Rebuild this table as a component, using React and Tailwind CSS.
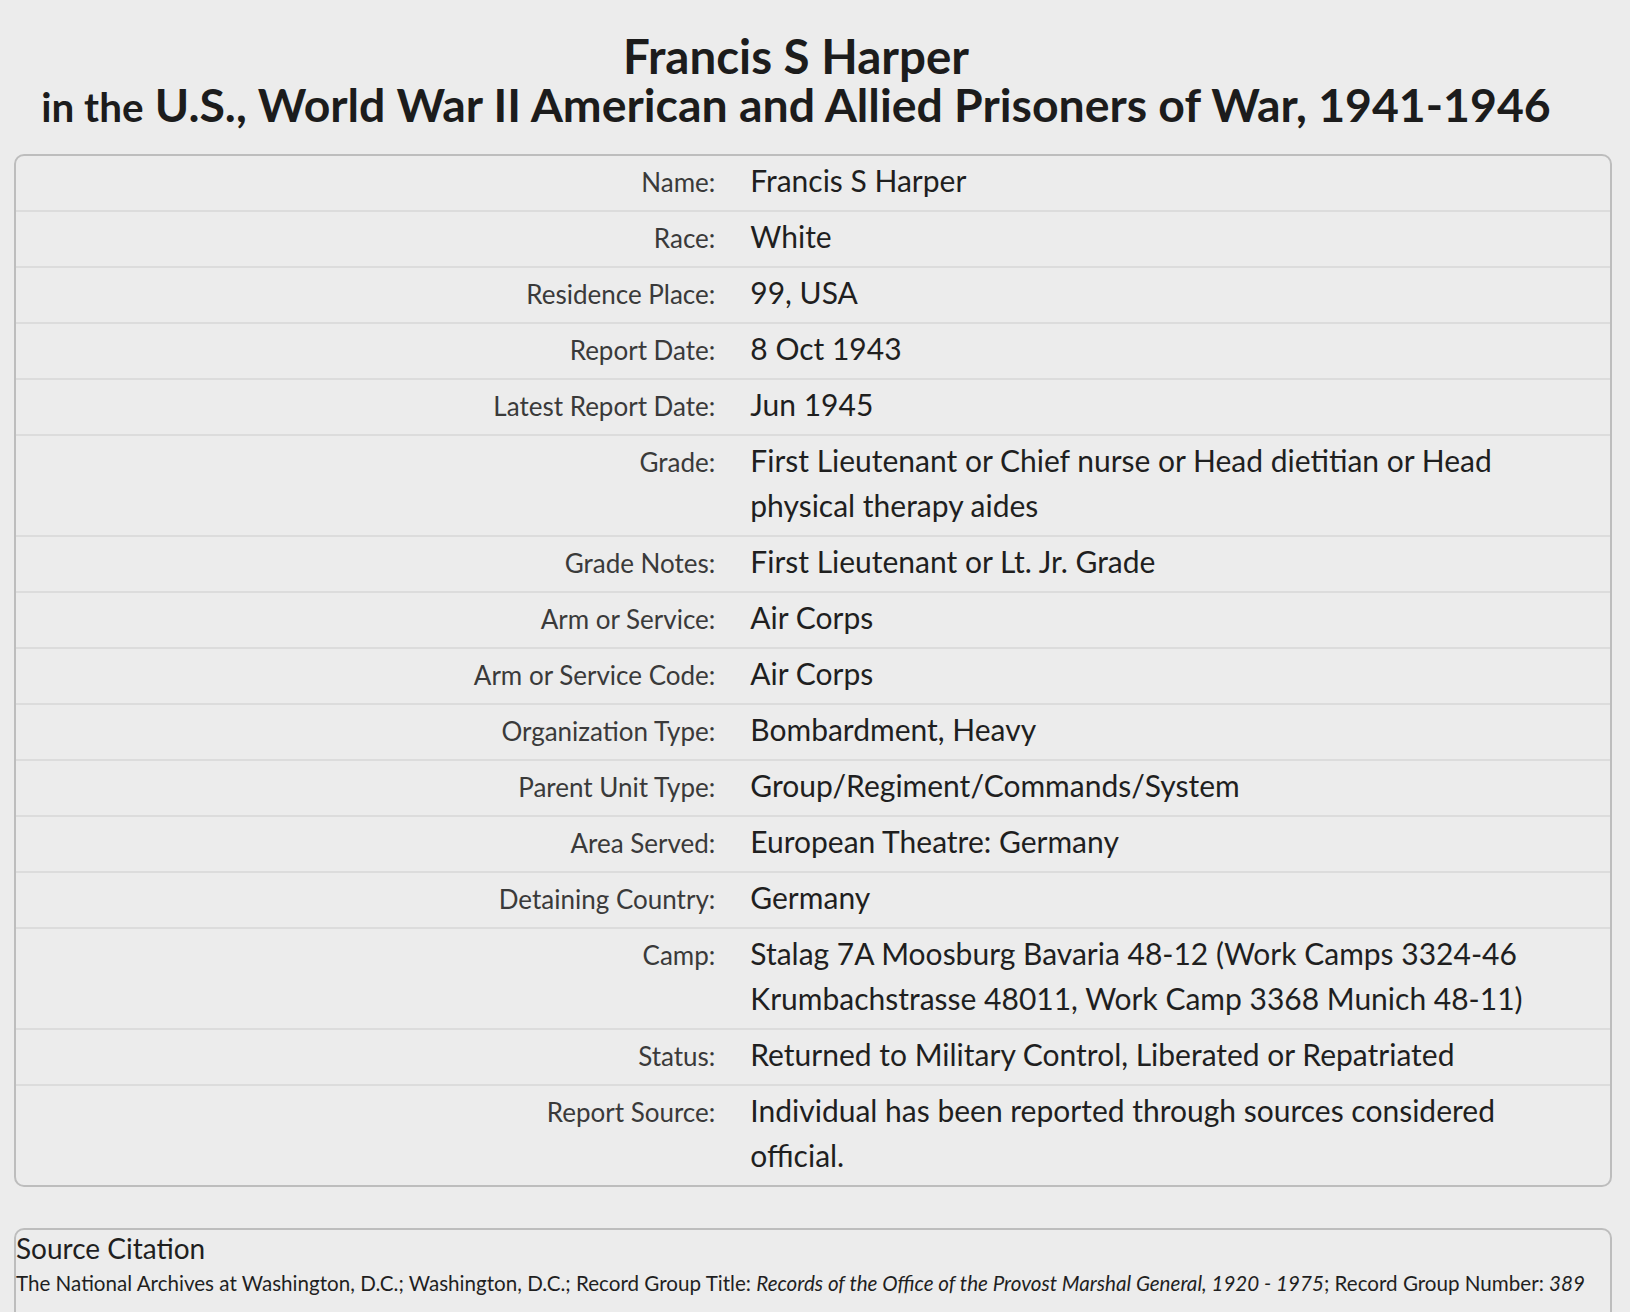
import React from "react";

const rows = [
  ["Name:", "Francis S Harper"],
  ["Race:", "White"],
  ["Residence Place:", "99, USA"],
  ["Report Date:", "8 Oct 1943"],
  ["Latest Report Date:", "Jun 1945"],
  ["Grade:", "First Lieutenant or Chief nurse or Head dietitian or Head physical therapy aides"],
  ["Grade Notes:", "First Lieutenant or Lt. Jr. Grade"],
  ["Arm or Service:", "Air Corps"],
  ["Arm or Service Code:", "Air Corps"],
  ["Organization Type:", "Bombardment, Heavy"],
  ["Parent Unit Type:", "Group/Regiment/Commands/System"],
  ["Area Served:", "European Theatre: Germany"],
  ["Detaining Country:", "Germany"],
  ["Camp:", "Stalag 7A Moosburg Bavaria 48-12 (Work Camps 3324-46 Krumbachstrasse 48011, Work Camp 3368 Munich 48-11)"],
  ["Status:", "Returned to Military Control, Liberated or Repatriated"],
  ["Report Source:", "Individual has been reported through sources considered official."],
];

export default function App() {
  return (
    <div className="min-h-screen bg-[#ececec] text-[#1f1f1f] font-['Lato',sans-serif] overflow-hidden">
      <h1 className="pt-[32px] pr-[38px] text-center font-bold text-[46.4px] leading-[48px] text-[#1c1c1c]">
        <span className="text-[47.5px]">Francis S Harper</span>
        <br />
        <span className="text-[40.4px]">in the</span> U.S., World War II American and Allied Prisoners of War, 1941-1946
      </h1>
      <div className="mt-[23px] ml-[14px] mr-[18px] border-2 border-[#bdbdbd] rounded-[10px]">
        {rows.map(([label, value], i) => (
          <div
            key={label}
            className={
              "grid grid-cols-[45%_55%] items-start pt-[2px] pb-[7px] " +
              (i < rows.length - 1 ? "border-b-2 border-[#dcdcdc]" : "")
            }
          >
            <div className="text-right pr-[18px] pt-[4px] text-[26px] leading-[41px] text-[#3a3a3a]">{label}</div>
            <div className="pl-[17px] pr-[18px] text-[30px] leading-[45px]">{value}</div>
          </div>
        ))}
      </div>
      <div className="mt-[41px] ml-[14px] mr-[18px] border-2 border-[#bdbdbd] rounded-[10px] pb-[40px]">
        <div className="text-[28px] leading-[36px]">Source Citation</div>
        <div className="text-[20.6px] leading-[34px] whitespace-nowrap">
          The National Archives at Washington, D.C.; Washington, D.C.; Record Group Title:{" "}
          <i>Records of the Office of the Provost Marshal General, 1920 - 1975</i>; Record Group Number: <i>389</i>
        </div>
      </div>
    </div>
  );
}
